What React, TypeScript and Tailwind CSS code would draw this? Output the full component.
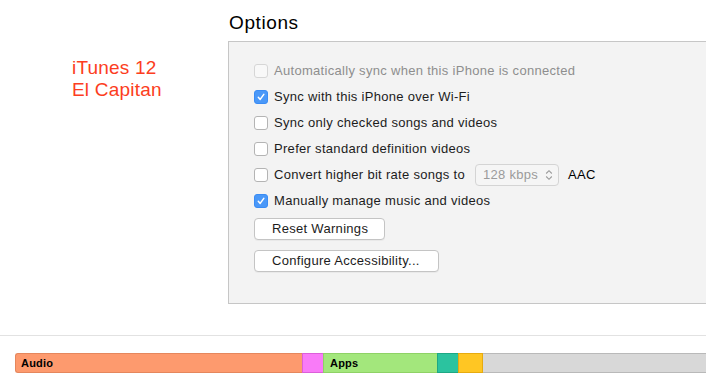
import React from 'react';

type Opt = { label: string; checked?: boolean; disabled?: boolean; extra?: boolean };

const options: Opt[] = [
  { label: 'Automatically sync when this iPhone is connected', disabled: true },
  { label: 'Sync with this iPhone over Wi-Fi', checked: true },
  { label: 'Sync only checked songs and videos' },
  { label: 'Prefer standard definition videos' },
  { label: 'Convert higher bit rate songs to', extra: true },
  { label: 'Manually manage music and videos', checked: true },
];

function Checkbox({ checked, disabled }: { checked?: boolean; disabled?: boolean }) {
  if (checked) {
    return (
      <span className="flex h-[14px] w-[14px] shrink-0 items-center justify-center rounded-[3px] border border-[#3a8cf4] bg-[#4a98f8]">
        <svg width="10" height="10" viewBox="0 0 10 10" fill="none">
          <polyline points="2.3,5.3 4.2,7.4 7.8,2.4" stroke="white" strokeWidth="1.5" strokeLinecap="round" strokeLinejoin="round" />
        </svg>
      </span>
    );
  }
  return (
    <span
      className={`h-[14px] w-[14px] shrink-0 rounded-[3px] border ${
        disabled ? 'border-[#d6d6d6] bg-[#f8f8f8]' : 'border-[#b4b4b4] bg-white'
      }`}
    />
  );
}

export default function App() {
  return (
    <div className="h-[387px] w-[706px] overflow-hidden bg-white font-['Liberation_Sans',Arial,sans-serif] text-[#1c1c1c]">
      <div className="flex">
        <div className="w-[228px] shrink-0 pl-[72px] pt-[57px] text-[19px] leading-[22px] tracking-[0.2px] text-[#fc3d21]">
          <div>iTunes 12</div>
          <div>El Capitan</div>
        </div>

        <div className="flex flex-1 flex-col pt-[11px]">
          <h1 className="pl-[1px] text-[19px] leading-[23px] tracking-[0.6px] text-black">Options</h1>
          <div className="mt-[7px] h-[263px] border-y border-l border-[#c6c6c6] bg-[#f3f3f3] pl-[25px] pt-[16px] tracking-[0.3px]">
            {options.map((o, i) => (
              <div key={i} className="flex h-[26px] items-center text-[13px]">
                <Checkbox checked={o.checked} disabled={o.disabled} />
                <span className={`ml-[6px] ${o.disabled ? 'text-[#8e8e8e]' : 'text-[#1c1c1c]'}`}>{o.label}</span>
                {o.extra && (
                  <>
                    <span className="ml-[10px] flex h-[22px] w-[84px] items-center justify-between rounded-[4px] border border-[#d4d4d4] bg-[#f5f5f5] pl-[7px] pr-[5px] text-[#9b9b9b]">
                      128 kbps
                      <svg width="8" height="12" viewBox="0 0 8 12" fill="none">
                        <polyline points="1.2,4.5 4,1.7 6.8,4.5" stroke="#9b9b9b" strokeWidth="1.1" />
                        <polyline points="1.2,7.5 4,10.3 6.8,7.5" stroke="#9b9b9b" strokeWidth="1.1" />
                      </svg>
                    </span>
                    <span className="ml-[9px] text-black">AAC</span>
                  </>
                )}
              </div>
            ))}
            <div className="mt-[4px] flex flex-col items-start gap-[10px] text-[13px]">
              <button className="h-[22px] w-[131px] rounded-[4px] border border-[#c4c4c4] bg-white text-left pl-[17px] leading-[20px] text-[#1c1c1c] shadow-[0_1px_0_rgba(0,0,0,0.04)]">
                Reset Warnings
              </button>
              <button className="h-[22px] w-[185px] rounded-[4px] border border-[#c4c4c4] bg-white text-left pl-[17px] leading-[20px] text-[#1c1c1c] shadow-[0_1px_0_rgba(0,0,0,0.04)]">
                Configure Accessibility...
              </button>
            </div>
          </div>
        </div>
      </div>

      <div className="mt-[31px] h-px bg-[#e2e2e2]" />

      <div className="mt-[17px] flex h-[20px] pl-[15px] text-[11px] font-bold leading-none tracking-[0.2px] text-black">
        <div className="flex w-[287px] items-center rounded-l-[3px] border border-r-0 border-[#e5875d] bg-[#fd9a6e] pl-[5px] pt-px">Audio</div>
        <div className="w-[21px] border-y border-l border-[#dc5fd9] bg-[#f97bf8]" />
        <div className="flex w-[114px] items-center border-y border-l border-[#8fd266] bg-[#a3e77c] pl-[6px] pt-px">Apps</div>
        <div className="w-[21px] border-y border-l border-[#1ea884] bg-[#2bc39f]" />
        <div className="w-[25px] border border-[#e7ab0f] bg-[#ffc623]" />
        <div className="flex-1 border-y border-[#b9b9b9] bg-[#d8d8d8]" />
      </div>
    </div>
  );
}
